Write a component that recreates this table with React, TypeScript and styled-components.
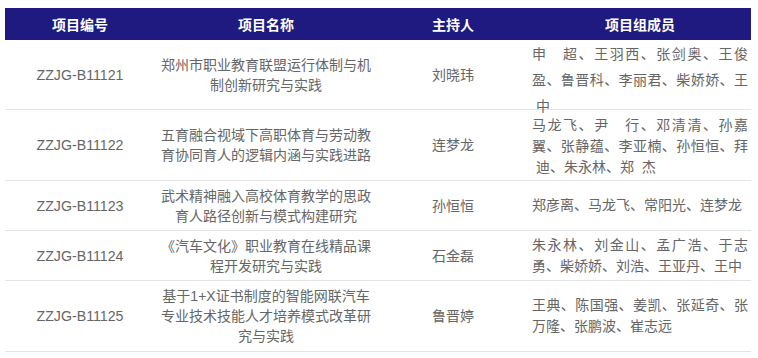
import React from 'react';
import styled, { createGlobalStyle } from 'styled-components';

interface Project {
  code: string;
  name: string;
  host: string;
  members: string;
  height: number;
  lead?: number; // line height of the member list
  nudge?: number;
}

const projects: Project[] = [
  {
    code: 'ZZJG-B11121',
    name: '郑州市职业教育联盟运行体制与机制创新研究与实践',
    host: '刘晓玮',
    members: '申\u3000超、王羽西、张剑奥、王俊盈、鲁晋科、李丽君、柴娇娇、王\u200b\u00a0中',
    height: 70,
    lead: 26,
    nudge: 10,
  },
  {
    code: 'ZZJG-B11122',
    name: '五育融合视域下高职体育与劳动教育协同育人的逻辑内涵与实践进路',
    host: '连梦龙',
    members: '马龙飞、尹\u3000行、邓清清、孙嘉翼、张静蕴、李亚楠、孙恒恒、拜\u200b\u00a0迪、朱永林、郑\u00a0\u00a0杰',
    height: 71,
    nudge: 2,
  },
  {
    code: 'ZZJG-B11123',
    name: '武术精神融入高校体育教学的思政育人路径创新与模式构建研究',
    host: '孙恒恒',
    members: '郑彦离、马龙飞、常阳光、连梦龙',
    height: 50,
  },
  {
    code: 'ZZJG-B11124',
    name: '《汽车文化》职业教育在线精品课程开发研究与实践',
    host: '石金磊',
    members: '朱永林、刘金山、孟广浩、于志勇、柴娇娇、刘浩、王亚丹、王中',
    height: 50,
  },
  {
    code: 'ZZJG-B11125',
    name: '基于1+X证书制度的智能网联汽车专业技术技能人才培养模式改革研究与实践',
    host: '鲁晋婷',
    members: '王典、陈国强、姜凯、张延奇、张万隆、张鹏波、崔志远',
    height: 71,
  },
];

const GlobalStyle = createGlobalStyle`
  body {
    margin: 0;
    background: #ffffff;
    font-family: "Liberation Sans", "Noto Sans CJK SC", sans-serif;
  }
`;

const Page = styled.div`
  padding: 8px 7px 0 5px;
`;

const Table = styled.div`
  width: 746px;
  display: flex;
  flex-direction: column;
`;

const Row = styled.div<{ $height: number }>`
  display: grid;
  grid-template-columns: 150px 222px 152px 222px;
  grid-template-rows: minmax(0, 1fr);
  height: ${(p) => p.$height}px;
  box-sizing: border-box;
  border-bottom: 1px solid #e4e4e4;
`;

const HeadRow = styled(Row)`
  background: #1f1a7f;
  border-bottom: none;
`;

const HeadCell = styled.div`
  display: flex;
  align-items: center;
  justify-content: center;
  color: #ffffff;
  font-family: "Noto Sans CJK SC", sans-serif;
  font-weight: 700;
  font-size: 14px;
`;

const Cell = styled.div`
  display: flex;
  align-items: center;
  justify-content: center;
  min-height: 0;
  padding: 0 5px;
  color: #666666;
  font-size: 14px;
  line-height: 20px;
  text-align: center;
`;

const CodeCell = styled(Cell)`
  font-size: 14.2px;
`;

const MemberCell = styled.div<{ $lead: number; $nudge: number }>`
  display: flex;
  align-items: center;
  min-height: 0;
  box-sizing: border-box;
  padding: ${(p) => p.$nudge}px 3px 0 3px;
  color: #666666;
  font-size: 14px;
  line-height: ${(p) => p.$lead}px;
  text-align: justify;
`;

export default function App() {
  return (
    <Page>
      <GlobalStyle />
      <Table>
        <HeadRow $height={32}>
          <HeadCell>项目编号</HeadCell>
          <HeadCell>项目名称</HeadCell>
          <HeadCell>主持人</HeadCell>
          <HeadCell>项目组成员</HeadCell>
        </HeadRow>
        {projects.map((p) => (
          <Row key={p.code} $height={p.height}>
            <CodeCell>{p.code}</CodeCell>
            <Cell>{p.name}</Cell>
            <Cell>{p.host}</Cell>
            <MemberCell $lead={p.lead ?? 21} $nudge={p.nudge ?? 0}>
              <span>{p.members}</span>
            </MemberCell>
          </Row>
        ))}
      </Table>
    </Page>
  );
}
